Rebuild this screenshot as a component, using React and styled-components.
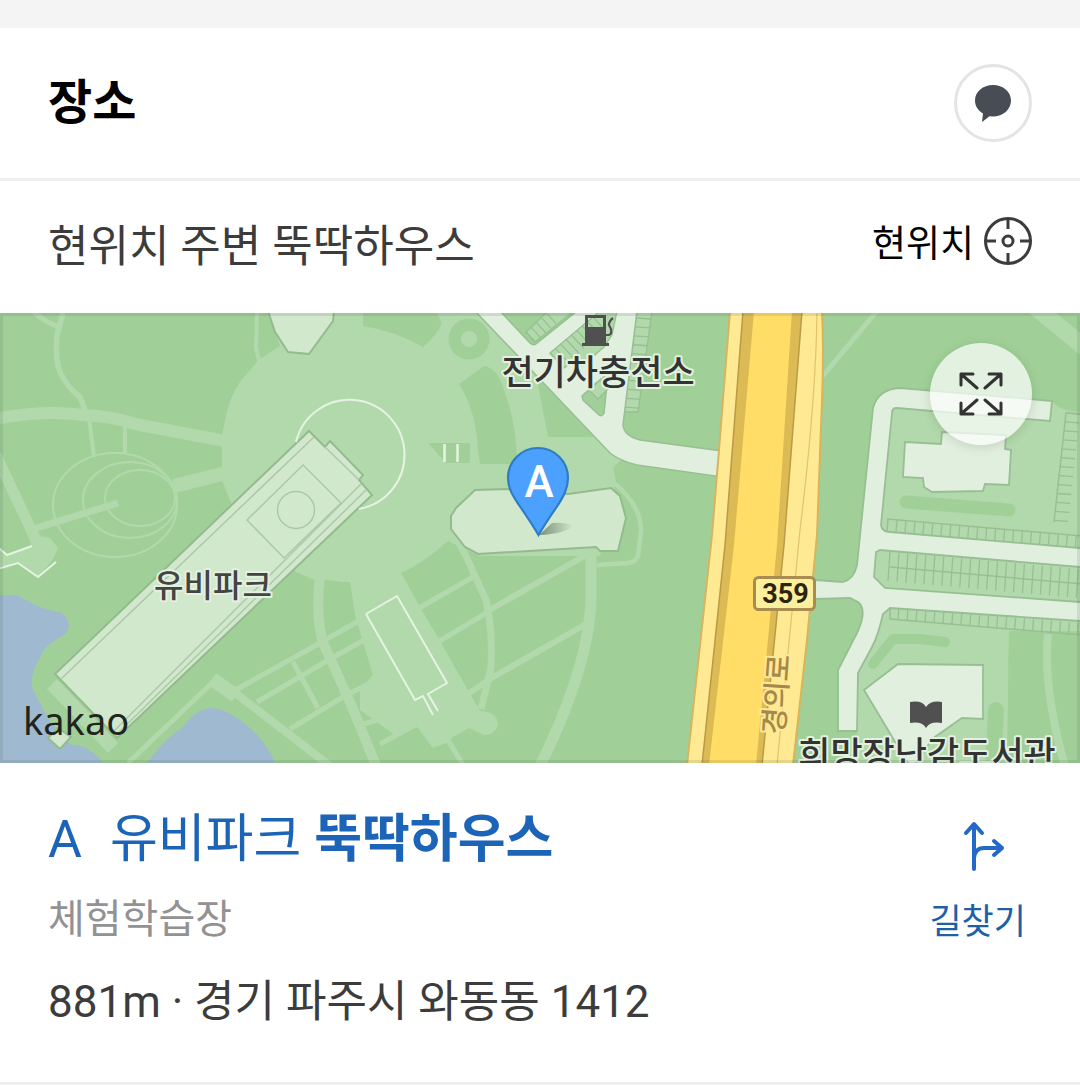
import React from "react";
import styled, { createGlobalStyle } from "styled-components";

const GlobalStyle = createGlobalStyle`
  *, *::before, *::after { box-sizing: border-box; }
  body {
    margin: 0;
    background: #fff;
    color: #000;
    font-family: Roboto, "Noto Sans CJK KR", sans-serif;
  }
  h1, h2, h3, p { margin: 0; font-weight: 400; }
  a { color: inherit; text-decoration: none; }
  button { margin: 0; padding: 0; border: 0; background: none; color: inherit; font: inherit; cursor: pointer; }
  svg { display: block; }
`;

const Page = styled.main`
  border-top: 28px solid #f4f4f4;
`;

const Header = styled.header`
  display: flex;
  align-items: center;
  justify-content: space-between;
  height: 153px;
  padding: 0 48px;
  border-bottom: 3px solid #efefef;
`;

const Title = styled.h1`
  && { font-weight: 700; }
  font-size: 48px;
  line-height: 56px;
`;

const ChatButton = styled.button`
  && { border: 3px solid #e4e4e4; }
  display: grid;
  place-items: center;
  width: 78px;
  height: 78px;
  border-radius: 50%;
`;

const LocationRow = styled.div`
  display: flex;
  align-items: center;
  justify-content: space-between;
  height: 132px;
  padding: 0 48px;
`;

const Query = styled.h2`
  color: #3c3c3c;
  font-size: 44px;
  line-height: 56px;
`;

const LocateButton = styled.button`
  && { font-size: 37px; line-height: 60px; }
  display: flex;
  align-items: flex-end;
  gap: 10px;
  padding-bottom: 4px;
  svg { margin-bottom: 10px; }
`;

const MapFrame = styled.section`
  position: relative;
  height: 450px;
  overflow: hidden;
  &::after {
    content: "";
    position: absolute;
    inset: 0;
    border: 3px solid rgba(60, 80, 60, 0.13);
    pointer-events: none;
  }
`;

const MapCanvas = styled.svg`
  width: 100%;
  height: 100%;
`;

const ExpandButton = styled.button`
  && { background: rgba(255, 255, 255, 0.7); }
  position: absolute;
  top: 30px;
  right: 48px;
  display: grid;
  place-items: center;
  width: 102px;
  height: 102px;
  border-radius: 50%;
  box-shadow: 0 2px 12px rgba(0, 0, 0, 0.12);
`;

const MapLabel = styled.text`
  font-family: Roboto, "Noto Sans CJK KR", sans-serif;
  font-size: ${(p) => p.$size}px;
  font-weight: ${(p) => p.$weight || 500};
  fill: ${(p) => p.$color || "#333"};
  stroke: ${(p) => p.$halo || "none"};
  stroke-width: 4px;
  stroke-linejoin: round;
  paint-order: stroke;
`;

const Kakao = styled.text`
  font-family: "Noto Sans", sans-serif;
  font-size: 38px;
  fill: #1f2421;
`;

const Place = styled.article`
  display: flex;
  justify-content: space-between;
  padding: 47px 48px 52px;
  border-bottom: 3px solid #efefef;
`;

const Details = styled.div`
  display: flex;
  flex-direction: column;
`;

const PlaceName = styled.h3`
  color: #1b64b7;
  font-size: 52px;
  line-height: 60px;
  a { display: flex; gap: 28px; }
`;

const Category = styled.p`
  margin-top: 22px;
  color: #929292;
  font-size: 40px;
  line-height: 56px;
`;

const Address = styled.p`
  margin-top: 26px;
  color: #3c3c3c;
  font-size: 44px;
  line-height: 56px;
`;

const Directions = styled.a`
  display: flex;
  flex-direction: column;
  align-items: center;
  gap: 26px;
  padding-top: 11px;
  padding-right: 6px;
  && { color: #1f5fa8; }
  font-size: 35px;
  line-height: 48px;
`;

const C = {
  base: "#a0d098",
  path: "#b2d9ac",
  building: "#d1e8cc",
  edge: "#98bf93",
  road: "#e1efde",
  water: "#9fb9d0",
};

function Ticks({ from, to, step, a, b, color = C.edge }) {
  const len = Math.hypot(to[0] - from[0], to[1] - from[1]);
  const n = Math.floor(len / step);
  let d = "";
  for (let i = 0; i <= n; i++) {
    const x = from[0] + ((to[0] - from[0]) * i * step) / len;
    const y = from[1] + ((to[1] - from[1]) * i * step) / len;
    d += `M${x + a[0]} ${y + a[1]}L${x + b[0]} ${y + b[1]}`;
  }
  return <path d={d} fill="none" stroke={color} strokeWidth="1.3" />;
}

function ParkMap() {
  return (
    <MapCanvas viewBox="0 313 1080 450" preserveAspectRatio="xMidYMid slice" role="img" aria-label="유비파크 주변 지도">
      <rect x="-2000" y="313" width="5080" height="450" fill={C.base} />

      {/* plaza */}
      <path
        fill={C.path}
        d="M222 435L225 420Q230 396 240 382L257 362L263 357L280 346L268 313H482L592 420L610 453L622 459L613 468L616 480L600 556H480L448 541Q425 562 401 573L420 607L440 641L470 694L480 711Q498 712 498 725Q494 736 484 735L469 728L453 737L448 742L433 748L417 727L395 735L360 710V690L373 675L355 615L350 583L327 580L315 580L296 572L232 505L222 480Z"
      />
      <g fill={C.base}>
        <path d="M363 313V326Q395 331 423 347Q437 335 442 323L437 313Z" />
        <path d="M459 384L484 366Q498 368 504 390Q517 425 517 464H480L478 450Q476 410 459 384Z" />
        <path d="M537 380L548 437H600L570 390Z" />
        <path d="M428 443H470V463H446Z" />
        <circle cx="469" cy="339" r="20.5" />
        <path d="M327 582H350L355 616L328 634Q322 610 327 582Z" />
      </g>
      <circle cx="469" cy="339" r="8" fill={C.path} />
      <path d="M444.500 444V462M457.500 444V462" stroke="#e6f3e3" strokeWidth="2.500" />

      {/* water */}
      <g fill={C.water}>
        <path d="M-900 595H17C30 602 42 610 60 612Q73 620 67 632C58 640 44 644 40 658Q29 675 33 690L48 718C62 738 68 746 78 745Q92 749 103 763H-900Z" />
        <path d="M147 763Q165 738 183 727Q195 709 212 708C235 710 266 738 275 763Z" />
      </g>

      {/* footpaths */}
      <g fill="none" stroke={C.path} strokeLinejoin="round">
        <path strokeWidth="12" d="M-100 424L0 418Q45 410 83 415Q112 416 135 424L225 441" />
        <path strokeWidth="5.500" d="M63 313L57 335Q55 360 60 372Q66 386 80 397L86 412" />
        <path strokeWidth="5" d="M33 311Q45 323 60 327" />
        <path strokeWidth="4" d="M257 313L256 348L260 364M89 418L94 457M125 423V454" />
        <path strokeWidth="14" d="M174 486L226 473" />
        <path strokeWidth="11" d="M-4 455L36 540" />
        <path strokeWidth="7" d="M33 529L118 503" />
        <ellipse cx="115" cy="505" rx="62" ry="52" strokeWidth="2" />
        <ellipse cx="130" cy="500" rx="47" ry="38" strokeWidth="2" />
        <ellipse cx="140" cy="498" rx="35" ry="28" strokeWidth="2" />
        <path strokeWidth="10" d="M320 575Q315 620 324 645L350 702L378 770" />
        <path strokeWidth="5" d="M230 693L313 647L362 619M257 702L325 662L364 640M290 729L343 697L376 680M293 662L318 708M380 744L417 724M364 724L384 718" />
        <path strokeWidth="8" d="M217 679L330 766" />
        <path strokeWidth="5" d="M215 680L128 763M448 740L463 765" />
        <path strokeWidth="14" d="M52 684L113 748" />
        <path strokeWidth="14" d="M212 679L236 696" />
        <path strokeWidth="7" d="M455 537Q467 556 473 572L486 600Q493 630 491 668L481 709" />
        <path strokeWidth="5" d="M419 608L473 577M438 642L488 612" />
        <path strokeWidth="6" d="M486 612L588 554M468 694L493 677L588 623" />
        <path strokeWidth="11" d="M591 550V592Q592 660 540 766" />
        <path strokeWidth="4.500" d="M613 482Q641 505 641 530L638 556Q636 562 628 563L597 565" />
        <path strokeWidth="5" d="M877 311L822 377" />
        <path strokeWidth="17" d="M1034 306L1095 356" />
      </g>
      <path fill={C.path} d="M27 534L50 538L58 548L53 559L38 577L18 563L-2 569V548L7 556L32 546Z" />
      <path d="M-20 532L7 555L32 546M-20 574L18 563L38 577L56 562" fill="none" stroke="#e6f3e3" strokeWidth="2" />

      {/* halls */}
      <g fill={C.building} stroke="#93bb8e" strokeWidth="2">
        <path d="M268 311L275 332L288 352L309 354L333 321L334 311Z" />
        <path d="M48 738L58 728L71 737L60 749Z" />
        <path d="M309 431L325 447L330 441L363 475L359 480L372 495L117 738L55 674Z" />
        <path d="M475 490L508 489L568 494L611 488L620 496L626 518L618 551H600L596 547L478 554L465 547L451 529V516L456 508Z" />
      </g>
      <g fill="none" stroke="#acc8a8" strokeWidth="1.500">
        <path d="M314 437L61 679M325 447L359 480M361 484L112 733M366 490L115 736" />
        <path d="M303 465L341 503L284 558L247 520Z" />
        <circle cx="296" cy="510" r="18.500" />
      </g>
      <path d="M296 442A55 55 0 1 1 359 509" fill="none" stroke="#e6f3e3" strokeWidth="2" />
      <path d="M366 614L397 596L447 683L428 694L438 711M433 715L423 696L415 700L366 614" fill="none" stroke="#e6f3e3" strokeWidth="2" />

      {/* roads and bays by the charging station */}
      <path fill={C.path} stroke={C.edge} strokeWidth="1.300" d="M637 311H652L638 412H624Z" />
      <Ticks from={[637, 318]} to={[625, 408]} step={9} a={[0, 0]} b={[14, 1]} />
      <path
        fill={C.road}
        stroke={C.edge}
        strokeWidth="1.500"
        d="M475 311L610 453Q620 461 637 465L722 477V451L640 440Q624 436 623 425L637 311H577L536 344Q533 346 530 343L500 311Z"
      />
      <g fill={C.path} stroke={C.edge} strokeWidth="1.300">
        <path d="M526 332L535 342L574 311H548Z" />
        <path d="M550 353L564 368L574 360L582 366L604 347L612 335L617 311H600Z" />
      </g>
      <Ticks from={[526, 332]} to={[550, 311]} step={7} a={[0, 0]} b={[9, 10]} />
      <Ticks from={[550, 353]} to={[594, 315]} step={7} a={[0, 0]} b={[13, 14]} />
      <path fill={C.base} stroke={C.edge} strokeWidth="1.500" d="M582 396L596 383L608 374L604 413Q602 418 598 414L583 400Z" />
      <path fill={C.path} stroke={C.edge} strokeWidth="1.300" d="M589 390L600 380L609 388L598 399Z" />

      {/* eastern block */}
      <path fill={C.path} d="M880 395L1053 402Q1060 411 1080 412H3000V640L1009 631L1007 763H857L858 673L883 613L870 560Z" />
      <path fill={C.base} d="M1009 631L3000 760V800H1007Z" />
      <path fill="none" stroke={C.path} strokeWidth="8" d="M1048 634Q1043 690 1065 766" />
      <path
        fill={C.road}
        stroke={C.edge}
        strokeWidth="1.800"
        d="M815 580L843 582Q854 579 857 565L873 408Q878 389 900 388L1052 401L1050 421L897 408Q892 408 892 413L881 525Q882 532 890 532L1080 548L3000 740V800L1080 567L880 550L876 552L874 577L885 588L1080 602L3000 700V780L1080 621L890 608L883 614Q878 636 872 647L858 673L857 731H838V670L857 633Q868 610 858 602L850 598L815 599Z"
      />
      <g fill={C.road} stroke={C.edge} strokeWidth="1.800">
        <path d="M942 432L1006 435L1005 449L1011 450L1009 485L985 484L983 491L932 492L924 487L923 478L903 477L905 442L941 444Z" />
        <path d="M898 664L983 665V719L962 718L932 739L912 770L864 690Z" />
      </g>
      <g fill="none" stroke={C.base} strokeLinecap="round" strokeLinejoin="round">
        <path strokeWidth="13" d="M906 502L1009 510" />
        <path strokeWidth="10" d="M873 664L893 639H920L945 642" />
        <path strokeWidth="16" d="M996 710L993 770" />
      </g>
      <path d="M887 531L888 519L1082 536M890 567L1082 584M890 608V619L1082 635M1082 414L1066 413L1054 522" fill="none" stroke={C.edge} strokeWidth="1.500" />
      <Ticks from={[897, 520]} to={[1080, 536]} step={9} a={[0, 0]} b={[-1, 12]} />
      <Ticks from={[890, 567]} to={[1080, 584]} step={9} a={[0, -15]} b={[-2, 14]} />
      <Ticks from={[899, 608]} to={[1080, 623]} step={9} a={[0, 0]} b={[-1, 12]} />
      <Ticks from={[1066, 413]} to={[1054, 523]} step={9} a={[0, 0]} b={[14, 1]} />

      {/* trunk road */}
      <path fill="#ffe992" stroke="#d8b45c" strokeWidth="2" d="M730 311L719 450L712 535L687 765H793L807 640L817 535L822 400Q824 350 822 311Z" />
      <path fill="#dcba54" d="M743 311L725 545L702 765H762L784 545L802 311Z" />
      <path fill="none" stroke="#b99b45" strokeWidth="1.500" d="M743 311L725 545L702 765M762 765L784 545L802 311" />
      <path fill="#ffdd66" d="M754 311L734 545L709 765H756L777 545L792 311Z" />
      <path fill="none" stroke="#e2c469" strokeWidth="1.200" d="M817 311Q816 400 800 530L777 765" />
      <rect x="754.500" y="577.500" width="60" height="32" rx="4" fill="#fdf09d" stroke="#a98d50" strokeWidth="3" />
      <MapLabel x="785.500" y="603" textAnchor="middle" $size={27} $weight={700} $color="#2b2410">359</MapLabel>
      <MapLabel transform="translate(784 735) rotate(-86)" $size={29} $weight={500} $color="#a5884a" $halo="#ffe992">경의로</MapLabel>

      {/* charging station */}
      <path fill="#505050" fillRule="evenodd" d="M585 315H606V343H609V346H582V343H585ZM588 318V327H603V318Z" />
      <path d="M606 335H609Q612 334 611 329L609 325Q609 321 613 318" fill="none" stroke="#505050" strokeWidth="2.200" />
      {/* library */}
      <path fill="#505050" d="M910 702Q922 700 926 707Q931 700 942 702V723Q930 721 926 728Q922 721 910 723Z" />

      <MapLabel x="598" y="385" textAnchor="middle" $size={35} $halo="#e3f1df">전기차충전소</MapLabel>
      <MapLabel x="213" y="597" textAnchor="middle" $size={32} $color="#444" $halo="#e3f1df">유비파크</MapLabel>
      <MapLabel x="927" y="767" textAnchor="middle" $size={35} $halo="#e3f1df">희망장난감도서관</MapLabel>
      <Kakao x="23" y="735">kakao</Kakao>

      {/* marker */}
      <defs>
        <linearGradient id="shade" x1="0" x2="1">
          <stop offset="0" stopColor="#3d5240" stopOpacity="0.600" />
          <stop offset="1" stopColor="#3d5240" stopOpacity="0" />
        </linearGradient>
      </defs>
      <path d="M539 535L552 523Q566 522 573 526Q565 534 539 535Z" fill="url(#shade)" />
      <path
        d="M538.500 535Q532 524 521 508C512 495 508 488 508 478A30 30 0 0 1 568 478C568 488 564 496 556 508Q545 524 538.500 535Z"
        fill="#4ca1ff"
        stroke="#2f7bc4"
        strokeWidth="2.200"
      />
      <MapLabel x="539" y="497" textAnchor="middle" $size={44} $color="#fff">A</MapLabel>
    </MapCanvas>
  );
}

export default function App() {
  return (
    <>
      <GlobalStyle />
      <Page>
        <Header>
          <Title>장소</Title>
          <ChatButton type="button" aria-label="카카오톡 공유">
            <svg width="36" height="38" viewBox="0 0 36 38">
              <path fill="#484c54" d="M18 1C28 1 36 7.500 36 16.500S28 32.500 18 32.500L14.500 32.200Q11 35 7 38Q7.500 33 8 29.500C3 26.500 0 22 0 16.500C0 7.500 8 1 18 1Z" />
            </svg>
          </ChatButton>
        </Header>
        <LocationRow>
          <Query>현위치 주변 뚝딱하우스</Query>
          <LocateButton type="button">
            현위치
            <svg width="48" height="48" viewBox="0 0 48 48" fill="none" stroke="#3c3c3c" strokeWidth="3">
              <circle cx="24" cy="24" r="22.500" />
              <circle cx="24" cy="24" r="5" />
              <path d="M24 1V12M24 36V47M1 24H12M36 24H47" />
            </svg>
          </LocateButton>
        </LocationRow>
        <MapFrame>
          <ParkMap />
          <ExpandButton type="button" aria-label="지도 크게 보기">
            <svg width="44" height="44" viewBox="0 0 44 44" fill="none" stroke="#333" strokeWidth="3" strokeLinecap="round" strokeLinejoin="round">
              <path d="M14 2H2V13M2 2L18 16M30 2H42V13M42 2L26 16M14 42H2V31M2 42L18 28M30 42H42V31M42 42L26 28" />
            </svg>
          </ExpandButton>
        </MapFrame>
        <Place>
          <Details>
            <PlaceName>
              <a href="#place">
                <span>A</span>
                <span>유비파크 <b>뚝딱하우스</b></span>
              </a>
            </PlaceName>
            <Category>체험학습장</Category>
            <Address>881m · 경기 파주시 와동동 1412</Address>
          </Details>
          <Directions href="#directions">
            <svg width="56" height="52" viewBox="0 0 56 52" fill="none" stroke="#2468c8" strokeWidth="4" strokeLinecap="round" strokeLinejoin="round">
              <path d="M24 48V4M16 12L24 3L32 12M24 37Q25 27 34 27H52M44 20L52 27L44 34" />
            </svg>
            길찾기
          </Directions>
        </Place>
      </Page>
    </>
  );
}
